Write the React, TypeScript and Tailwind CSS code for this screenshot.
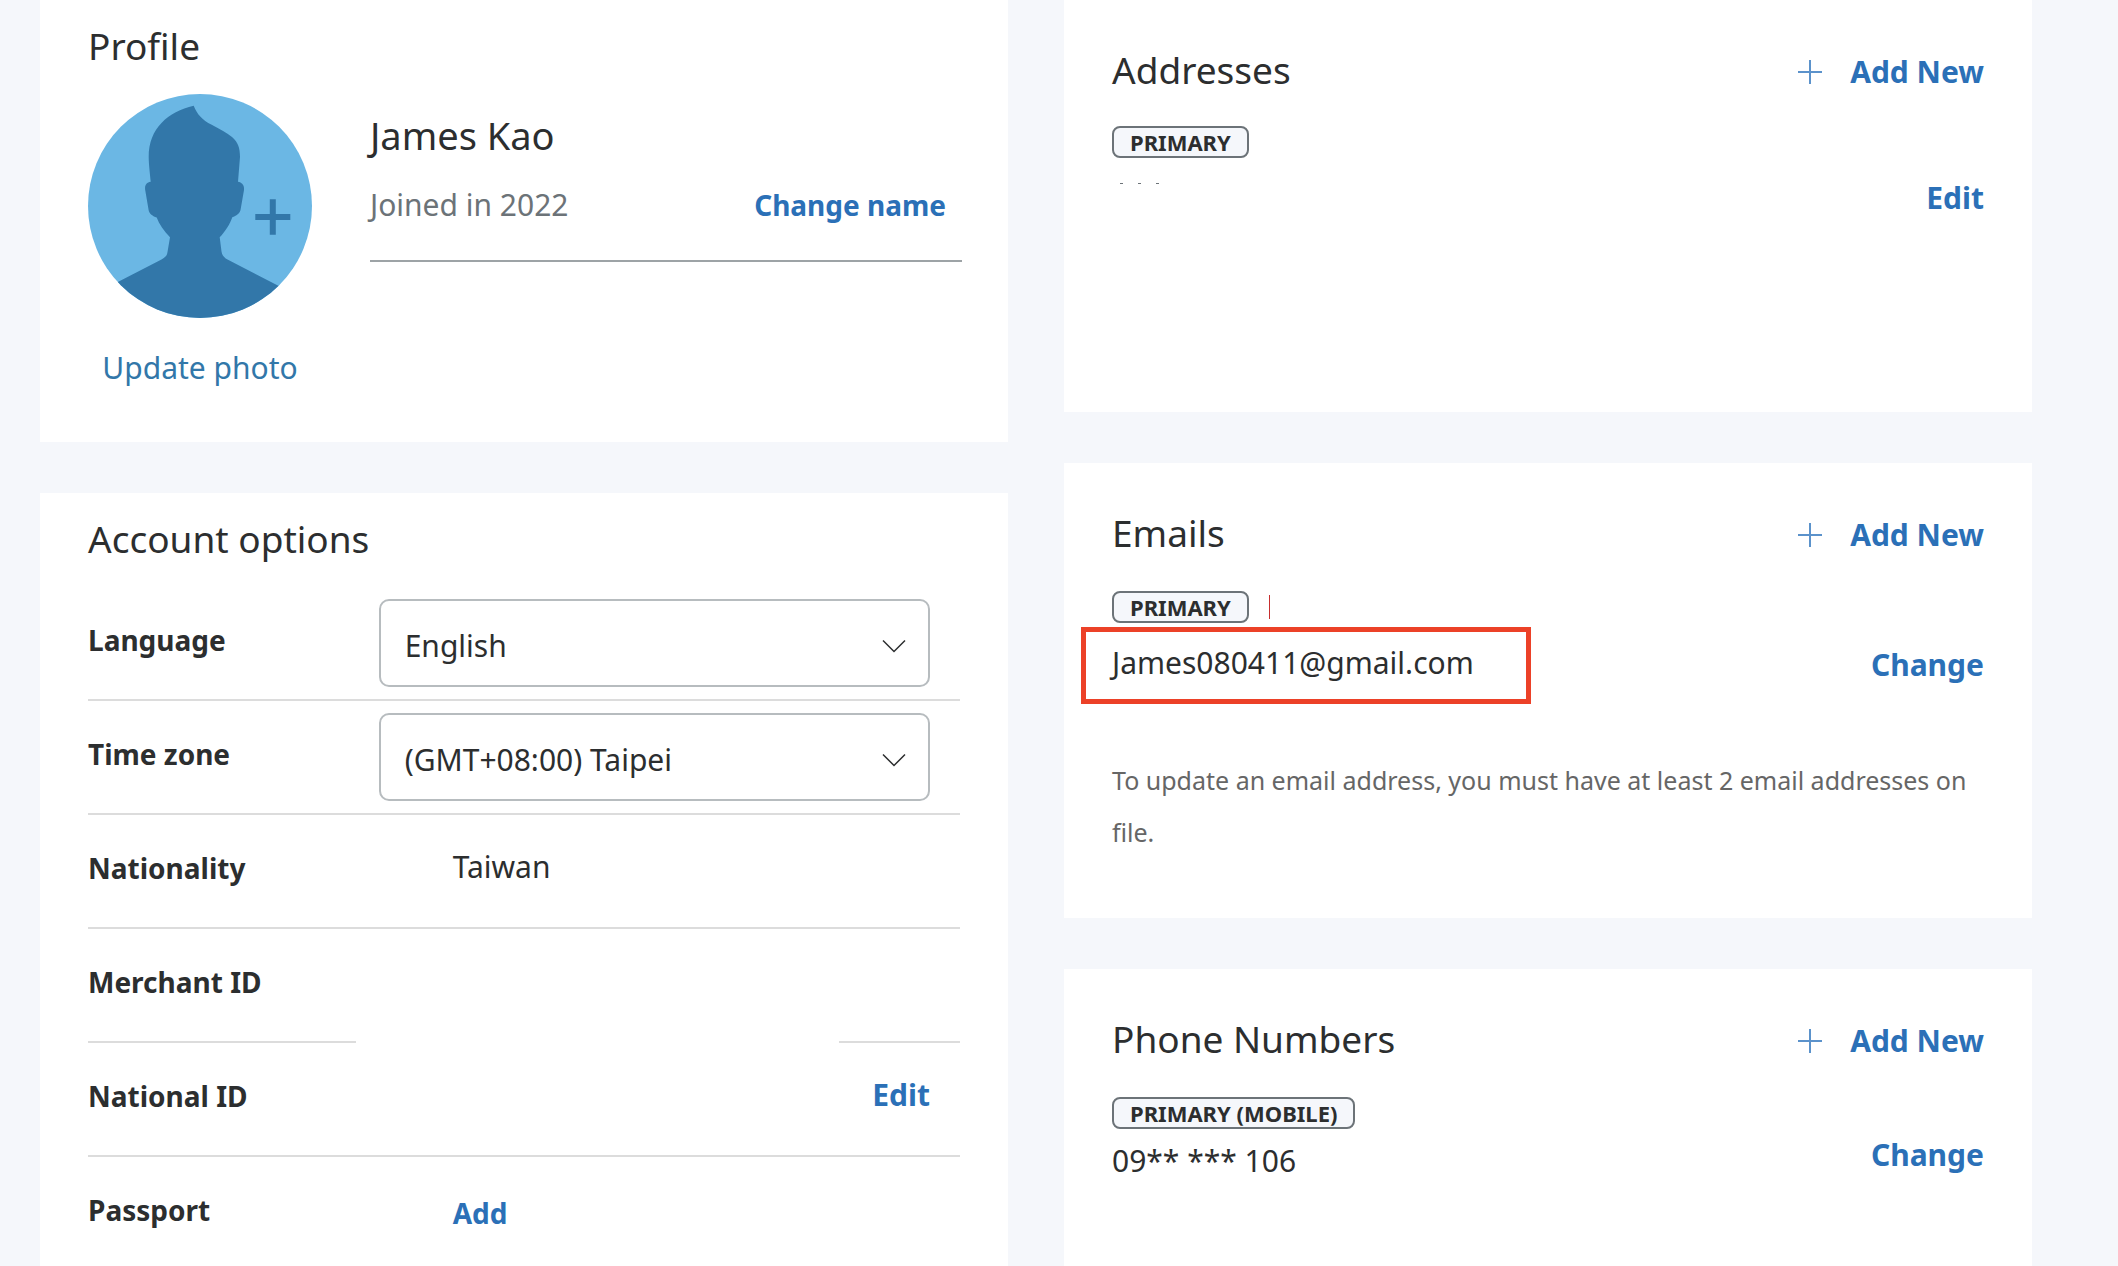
import type { ReactNode } from "react";

type AccountRowProps = {
  label: string;
  htmlFor?: string;
  children?: ReactNode;
  divider?: ReactNode;
};

type ContactCardProps = {
  title: string;
  children: ReactNode;
  className?: string;
};

function Avatar() {
  return (
    <svg viewBox="0 0 224 224" className="size-56" aria-hidden="true">
      <defs>
        <clipPath id="avatar-clip">
          <circle cx="112" cy="112" r="112" />
        </clipPath>
      </defs>
      <circle cx="112" cy="112" r="112" fill="#6bb7e4" />
      <g clipPath="url(#avatar-clip)" fill="#3277a9">
        <path d="M105.7 11.7C109 20 114 26 123.7 30.7C132 35 139 39 144 43C150 48 152 54 152 63L150 87.7C154 88.5 156.5 91 156 96L152.7 115C152.3 119.5 148 122 144.3 123.3C142 130 137 138 131.7 143.3L133.5 157.5C134 161 136 163.7 139.5 165.5L190.3 191.7L224 209V224H0V203L30.3 187.7L73.5 165.5C77 163.6 79.2 161.5 79.5 158L82 143.3C76 137 71 130 68.7 123.5C65 122.5 61 119.5 60.6 116L57.2 96C56.5 91 58.5 88.5 62.7 87.7C62 80 60.7 70 60.7 63C60.7 34 80 18 105.7 11.7Z" />
      </g>
      <path d="M167.3 123H202.3M184.8 105.3V140.7" stroke="#3277a9" strokeWidth="6" fill="none" />
    </svg>
  );
}

function Select({ id, value }: { id: string; value: string }) {
  return (
    <div className="relative mt-3">
      <select
        id={id}
        defaultValue={value}
        className="h-22 w-full appearance-none rounded-[10px] border-2 border-[#b7bcbf] bg-white pt-1 pr-16 pl-6 text-[30px] text-[#2c2e2f]"
      >
        <option>{value}</option>
      </select>
      <svg
        viewBox="0 0 24 14"
        className="pointer-events-none absolute top-10 right-6 h-3.5 w-6"
        fill="none"
        stroke="#2c2e2f"
        strokeWidth="1.5"
        aria-hidden="true"
      >
        <path d="M1 1.5L12 12.5L23 1.5" />
      </svg>
    </div>
  );
}

function AccountRow({ label, htmlFor, children, divider }: AccountRowProps) {
  return (
    <div>
      <div className="grid h-28 grid-cols-3">
        <div className="pt-[33px] text-[28px] leading-10 font-bold">
          {htmlFor ? <label htmlFor={htmlFor}>{label}</label> : label}
        </div>
        <div className="col-span-2 pr-[30px]">{children}</div>
      </div>
      {divider ?? <div className="h-0.5 bg-[#dcdcdc]" />}
    </div>
  );
}

function Badge({ children }: { children: ReactNode }) {
  return (
    <div className="flex h-8 w-fit items-center rounded-lg border-2 border-[#6c7378] bg-[#f5f7fb] px-4 text-[22px] leading-7 font-bold whitespace-nowrap">
      {children}
    </div>
  );
}

function ContactCard({ title, children, className = "" }: ContactCardProps) {
  return (
    <section className={`bg-white px-12 pt-[46px] ${className}`}>
      <div className="mb-8 flex h-12 items-start justify-between">
        <h2 className="text-[37px] leading-12">{title}</h2>
        <button
          type="button"
          className="flex items-center gap-7 pt-0.5 text-[30px] leading-12 font-bold text-[#2b70b7]"
        >
          <svg viewBox="0 0 24 24" className="size-6" stroke="#5b92cb" strokeWidth="2" aria-hidden="true">
            <path d="M0 12H24M12 0V24" />
          </svg>
          Add New
        </button>
      </div>
      {children}
    </section>
  );
}

function TextButton({ children }: { children: ReactNode }) {
  return (
    <button type="button" className="text-[30px] leading-10 font-bold text-[#2b70b7]">
      {children}
    </button>
  );
}

export default function App() {
  return (
    <main className="grid min-h-screen grid-cols-2 gap-14 bg-[#f5f7fb] pr-[86px] pl-10 font-['Noto_Sans',sans-serif] text-[#2c2e2f]">
      <div className="flex flex-col gap-[51px]">
        <section className="bg-white pt-[22px] pr-[46px] pb-[54px] pl-12">
          <h2 className="text-[37px] leading-12">Profile</h2>
          <div className="mt-6 flex gap-[58px]">
            <div className="flex flex-col items-center gap-[30px]">
              <Avatar />
              <button type="button" className="text-[30px] leading-10 text-[#3277a9]">
                Update photo
              </button>
            </div>
            <div className="flex-1 pt-[17px]">
              <p className="text-[38px] leading-12">James Kao</p>
              <div className="mt-[26px] flex items-baseline justify-between border-b-2 border-[#9da3a6] pr-4 pb-[35px]">
                <p className="text-[30px] leading-10 text-[#6c7378]">Joined in 2022</p>
                <button type="button" className="text-[28px] leading-10 font-bold text-[#2b70b7]">
                  Change name
                </button>
              </div>
            </div>
          </div>
        </section>

        <section className="flex-1 bg-white px-12 pt-[22px]">
          <h2 className="mb-6 text-[37px] leading-12">Account options</h2>
          <AccountRow label="Language" htmlFor="language">
            <Select id="language" value="English" />
          </AccountRow>
          <AccountRow label="Time zone" htmlFor="timezone">
            <Select id="timezone" value="(GMT+08:00) Taipei" />
          </AccountRow>
          <AccountRow label="Nationality">
            <p className="pt-8 pl-[74px] text-[30px] leading-10">Taiwan</p>
          </AccountRow>
          <AccountRow
            label="Merchant ID"
            divider={
              <div className="flex justify-between">
                <div className="h-0.5 w-[268px] bg-[#dcdcdc]" />
                <div className="h-0.5 w-[121px] bg-[#dcdcdc]" />
              </div>
            }
          />
          <AccountRow label="National ID">
            <div className="flex justify-end pt-8">
              <TextButton>Edit</TextButton>
            </div>
          </AccountRow>
          <AccountRow label="Passport">
            <div className="pt-9 pl-[74px]">
              <button type="button" className="text-[28px] leading-10 font-bold text-[#2b70b7]">
                Add
              </button>
            </div>
          </AccountRow>
        </section>
      </div>

      <div className="flex flex-col gap-[51px]">
        <ContactCard title="Addresses" className="pb-[194px]">
          <div className="flex justify-between">
            <div>
              <Badge>PRIMARY</Badge>
              <div className="mt-[25px] flex gap-[15px] pl-2">
                <span className="h-px w-[3px] bg-[#6c7378]" />
                <span className="h-px w-[3px] bg-[#6c7378]" />
                <span className="h-px w-[3px] bg-[#6c7378]" />
              </div>
            </div>
            <div className="pt-[52px]">
              <TextButton>Edit</TextButton>
            </div>
          </div>
        </ContactCard>

        <ContactCard title="Emails" className="pb-[60px]">
          <div className="flex justify-between">
            <div>
              <div className="flex items-center gap-5 pt-0.5">
                <Badge>PRIMARY</Badge>
                <span className="h-6 w-px bg-[#c72e2e]" />
              </div>
              <div className="relative mt-5">
                <p className="text-[30px] leading-10">James080411@gmail.com</p>
                <div className="pointer-events-none absolute -top-4 -left-[31px] h-[77px] w-[450px] border-5 border-[#ec4128]" />
              </div>
            </div>
            <div className="pt-14">
              <TextButton>Change</TextButton>
            </div>
          </div>
          <p className="mt-[69px] text-[25px] leading-13 text-[#666666]">
            To update an email address, you must have at least 2 email addresses on file.
          </p>
        </ContactCard>

        <ContactCard title="Phone Numbers" className="flex-1">
          <div className="flex justify-between">
            <div className="pt-0.5">
              <Badge>PRIMARY (MOBILE)</Badge>
              <p className="mt-3 text-[30px] leading-10">09** *** 106</p>
            </div>
            <div className="pt-10">
              <TextButton>Change</TextButton>
            </div>
          </div>
        </ContactCard>
      </div>
    </main>
  );
}
